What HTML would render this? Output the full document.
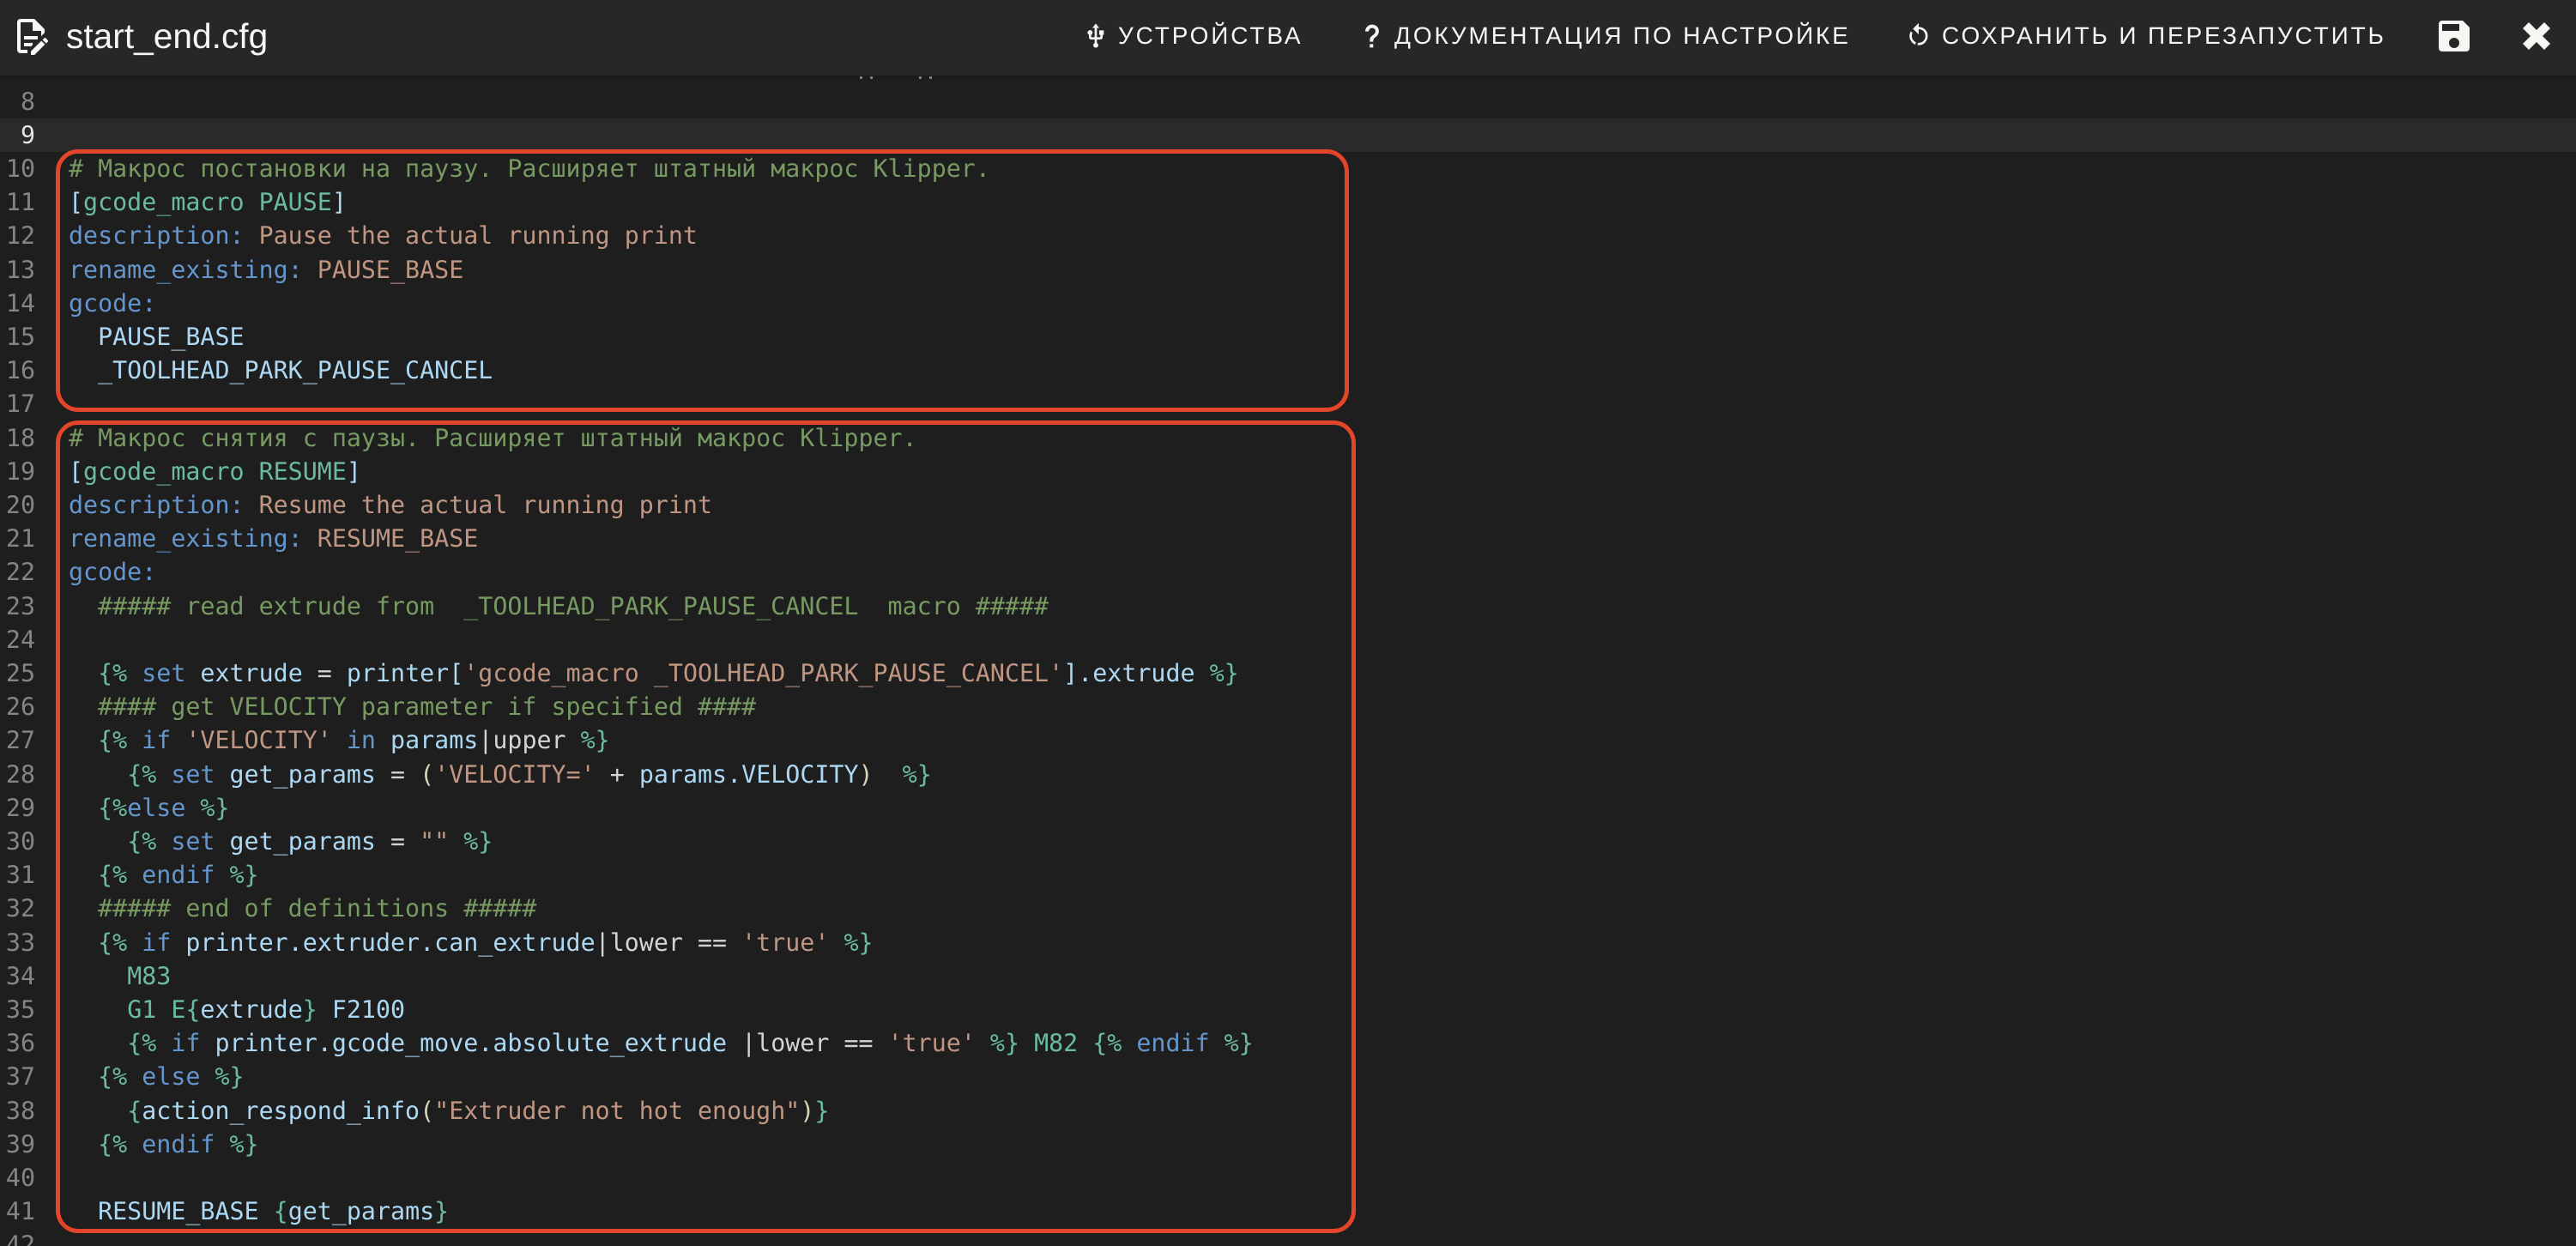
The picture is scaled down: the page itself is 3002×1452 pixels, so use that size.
<!DOCTYPE html>
<html lang="ru">
<head>
<meta charset="utf-8">
<title>start_end.cfg</title>
<style>
html,body{margin:0;padding:0;width:3002px;height:1452px;overflow:hidden;background:#1e1e1e}
body{position:relative;font-family:"Liberation Sans",Arial,sans-serif;text-rendering:geometricPrecision}
.hl{position:absolute;left:0;top:138px;width:3002px;height:39px;background:#2a2a2a}
.code,.gut{position:absolute;top:98.5px;font-family:"DejaVu Sans Mono","Liberation Mono",monospace;font-size:28.32px;line-height:39.2px;white-space:pre;margin:0}
.code{left:80px;color:#d4d4d4}
.gut{left:0;width:41px;text-align:right;color:#858585}
.gut b{font-weight:normal;color:#e4e4e4}
.c{color:#779a63}.k{color:#6496cd}.s{color:#c09682}.v{color:#add8f3}.t{color:#6bbba2}.w{color:#d4d4d4}.p{color:#d6d6b4}
.box{position:absolute;box-sizing:border-box;border:5px solid #e2452a;border-radius:26px}
.hdr{position:absolute;left:0;top:0;width:3002px;height:88px;background:#272727;box-shadow:0 2px 5px rgba(0,0,0,.22)}
.hdr svg{position:absolute;fill:#f6f6f2}
.tt{position:absolute;left:77px;top:19px;font-size:40.7px;line-height:46px;color:#f6f6f2;white-space:nowrap}
.n{position:absolute;top:26px;font-size:28px;line-height:32px;letter-spacing:2.85px;color:#f6f6f2;white-space:nowrap}
.d{position:absolute;top:89px;width:3px;height:3px;background:#8c8c84}
</style>
</head>
<body>
<div class="d" style="left:1002px"></div><div class="d" style="left:1014px"></div><div class="d" style="left:1071px"></div><div class="d" style="left:1083px"></div>
<div class="hl"></div>
<pre class="gut">8
<b>9</b>
10
11
12
13
14
15
16
17
18
19
20
21
22
23
24
25
26
27
28
29
30
31
32
33
34
35
36
37
38
39
40
41
42</pre>
<pre class="code">


<span class="c"># Макрос постановки на паузу. Расширяет штатный макрос Klipper.</span>
<span class="v">[</span><span class="t">gcode_macro PAUSE</span><span class="v">]</span>
<span class="k">description:</span> <span class="s">Pause the actual running print</span>
<span class="k">rename_existing:</span> <span class="s">PAUSE_BASE</span>
<span class="k">gcode:</span>
<span class="v">  PAUSE_BASE</span>
<span class="v">  _TOOLHEAD_PARK_PAUSE_CANCEL</span>

<span class="c"># Макрос снятия с паузы. Расширяет штатный макрос Klipper.</span>
<span class="v">[</span><span class="t">gcode_macro RESUME</span><span class="v">]</span>
<span class="k">description:</span> <span class="s">Resume the actual running print</span>
<span class="k">rename_existing:</span> <span class="s">RESUME_BASE</span>
<span class="k">gcode:</span>
<span class="c">  ##### read extrude from  _TOOLHEAD_PARK_PAUSE_CANCEL  macro #####</span>

  <span class="t">{%</span> <span class="k">set</span> <span class="v">extrude</span> <span class="w">=</span> <span class="v">printer[</span><span class="s">'gcode_macro _TOOLHEAD_PARK_PAUSE_CANCEL'</span><span class="v">].extrude</span> <span class="t">%}</span>
<span class="c">  #### get VELOCITY parameter if specified ####</span>
  <span class="t">{%</span> <span class="k">if</span> <span class="s">'VELOCITY'</span> <span class="k">in</span> <span class="v">params</span><span class="w">|upper</span> <span class="t">%}</span>
    <span class="t">{%</span> <span class="k">set</span> <span class="v">get_params</span> <span class="w">=</span> <span class="p">(</span><span class="s">'VELOCITY='</span> <span class="w">+</span> <span class="v">params.VELOCITY</span><span class="p">)</span>  <span class="t">%}</span>
  <span class="t">{%</span><span class="k">else</span> <span class="t">%}</span>
    <span class="t">{%</span> <span class="k">set</span> <span class="v">get_params</span> <span class="w">=</span> <span class="s">""</span> <span class="t">%}</span>
  <span class="t">{%</span> <span class="k">endif</span> <span class="t">%}</span>
<span class="c">  ##### end of definitions #####</span>
  <span class="t">{%</span> <span class="k">if</span> <span class="v">printer.extruder.can_extrude</span><span class="w">|lower</span> <span class="w">==</span> <span class="s">'true'</span> <span class="t">%}</span>
    <span class="t">M83</span>
    <span class="t">G1 E{</span><span class="v">extrude</span><span class="t">}</span> <span class="v">F2100</span>
    <span class="t">{%</span> <span class="k">if</span> <span class="v">printer.gcode_move.absolute_extrude</span> <span class="w">|lower</span> <span class="w">==</span> <span class="s">'true'</span> <span class="t">%}</span> <span class="t">M82</span> <span class="t">{%</span> <span class="k">endif</span> <span class="t">%}</span>
  <span class="t">{%</span> <span class="k">else</span> <span class="t">%}</span>
    <span class="t">{</span><span class="v">action_respond_info</span><span class="p">(</span><span class="s">"Extruder not hot enough"</span><span class="p">)</span><span class="t">}</span>
  <span class="t">{%</span> <span class="k">endif</span> <span class="t">%}</span>

  <span class="v">RESUME_BASE</span> <span class="t">{</span><span class="v">get_params</span><span class="t">}</span></pre>
<div class="box" style="left:65px;top:174px;width:1507px;height:306px"></div>
<div class="box" style="left:65px;top:490px;width:1515px;height:947px"></div>
<div class="hdr">
  <svg style="left:12px;top:18px" width="48" height="48" viewBox="0 0 24 24"><path d="M8,12H16V14H8V12M10,20H6V4H13V9H18V12.1L20,10.1V8L14,2H6A2,2 0 0,0 4,4V20A2,2 0 0,0 6,22H10V20M8,18H12.1L13,17.1V16H8V18M20.2,13C20.3,13 20.5,13.1 20.6,13.2L21.9,14.5C22.1,14.7 22.1,15.1 21.9,15.3L20.9,16.3L18.8,14.2L19.8,13.2C19.9,13.1 20.1,13 20.2,13M20.2,16.9L14.1,23H12V20.9L18.1,14.8L20.2,16.9Z"/></svg>
  <div class="tt">start_end.cfg</div>
  <svg style="left:1261px;top:26px" width="32" height="32" viewBox="0 0 24 24"><path d="M15,7V11H16V13H13V5H15L12,1L9,5H11V13H8V10.93C8.7,10.56 9.2,9.85 9.2,9C9.2,7.78 8.21,6.8 7,6.8C5.78,6.8 4.8,7.78 4.8,9C4.8,9.85 5.3,10.56 6,10.93V13A2,2 0 0,0 8,15H11V18.05C10.29,18.41 9.8,19.15 9.8,20A2.2,2.2 0 0,0 12,22.2A2.2,2.2 0 0,0 14.2,20C14.2,19.15 13.71,18.41 13,18.05V15H16A2,2 0 0,0 18,13V11H19V7H15Z"/></svg>
  <div class="n" style="left:1303px">УСТРОЙСТВА</div>
  <svg style="left:1583px;top:26px" width="32" height="32" viewBox="0 0 24 24"><path d="M10,19H13V22H10V19M12,2C17.35,2.22 19.68,7.62 16.5,11.67C15.67,12.67 14.33,13.33 13.67,14.17C13,15 13,16 13,17H10C10,15.33 10,13.92 10.67,12.92C11.33,11.92 12.67,11.33 13.5,10.67C15.92,8.43 15.32,5.26 12,5A3,3 0 0,0 9,8H6A6,6 0 0,1 12,2Z"/></svg>
  <div class="n" style="left:1625px">ДОКУМЕНТАЦИЯ ПО НАСТРОЙКЕ</div>
  <svg style="left:2220px;top:26px" width="32" height="32" viewBox="0 0 24 24"><path d="M12,4C14.1,4 16.1,4.8 17.6,6.3C20.7,9.4 20.7,14.5 17.6,17.6C15.8,19.5 13.3,20.2 10.9,19.9L11.4,17.9C13.1,18.1 14.9,17.5 16.2,16.2C18.5,13.9 18.5,10.1 16.2,7.7C15.1,6.6 13.5,6 12,6V10.6L7,5.6L12,0.6V4M6.3,17.6C3.7,15 3.3,11 5.1,7.9L6.6,9.4C5.5,11.6 5.9,14.4 7.8,16.2C8.3,16.7 8.9,17.1 9.6,17.4L9,19.4C8,19 7.1,18.4 6.3,17.6Z"/></svg>
  <div class="n" style="left:2263px">СОХРАНИТЬ И ПЕРЕЗАПУСТИТЬ</div>
  <svg style="left:2836px;top:18px" width="48" height="48" viewBox="0 0 24 24"><path d="M15,9H5V5H15M12,19A3,3 0 0,1 9,16A3,3 0 0,1 12,13A3,3 0 0,1 15,16A3,3 0 0,1 12,19M17,3H5C3.89,3 3,3.9 3,5V19A2,2 0 0,0 5,21H19A2,2 0 0,0 21,19V7L17,3Z"/></svg>
  <svg style="left:2940px;top:26px" width="32" height="32" viewBox="0 0 32 32"><path d="M7,0L16,9L25,0L32,7L23,16L32,25L25,32L16,23L7,32L0,25L9,16L0,7Z"/></svg>
</div>
</body>
</html>
